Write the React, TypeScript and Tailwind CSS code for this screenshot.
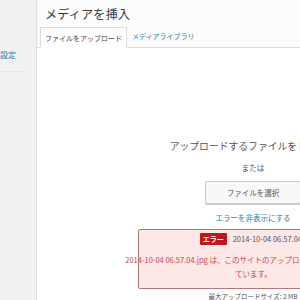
import React from "react";

export default function App() {
  const jp = { fontFamily: '"Noto Sans CJK JP", "Noto Sans", sans-serif' };
  return (
    <div className="w-[300px] h-[300px] overflow-hidden flex bg-white" style={jp}>
      <div className="w-[37px] shrink-0 bg-[#f1f1f1] border-r border-[#dedede] overflow-hidden">
        <div className="mt-[47px] h-[16px] flex justify-end pr-[22px] text-[8px] leading-[16px] text-[#2a7ea8] whitespace-nowrap">
          <span className="-mr-[2px]">の設定</span>
        </div>
        <div className="mt-[8px] w-[24px] h-px bg-[#e6e6e6]" />
      </div>
      <div className="flex-1 flex flex-col min-w-0">
        <div className="h-[48px] bg-[#fcfcfc] border-b border-[#dddddd] flex flex-col">
          <div className="pl-[8px] pt-[4px] h-[23px] text-[12px] leading-[20px] text-[#32373c] tracking-[0.3px] whitespace-nowrap">
            メディアを挿入
          </div>
          <div className="flex items-end pl-[3px] h-[24px]">
            <div className="h-[21px] -mb-px bg-white border border-b-0 border-[#dddddd] px-[4px] flex items-center text-[7px] text-[#444] whitespace-nowrap">
              ファイルをアップロード
            </div>
            <div className="h-[21px] px-[5px] flex items-center text-[7px] text-[#2a7ea8] whitespace-nowrap">
              メディアライブラリ
            </div>
          </div>
        </div>
        <div className="ml-[100px] w-[232px] flex flex-col items-center">
          <div className="mt-[90px] text-[9.8px] leading-[16px] text-[#555] whitespace-nowrap">
            アップロードするファイルをドロップ
          </div>
          <div className="mt-[9px] text-[7.5px] leading-[10px] text-[#555]">または</div>
          <div className="mt-[8px] w-[96px] h-[23px] bg-[#f7f7f7] border border-[#cccccc] rounded-[2px] shadow-[0_1px_0_#ccc] flex items-center justify-center text-[7.5px] text-[#555] whitespace-nowrap">
            ファイルを選択
          </div>
          <div className="mt-[9px] text-[7.5px] leading-[10px] text-[#2a7ea8] whitespace-nowrap">
            エラーを非表示にする
          </div>
          <div className="mt-[6px] self-stretch ml-[1px] h-[60px] bg-[#fde8e8] border border-[#b07878] rounded-[2px] flex flex-col items-center text-[7.5px] whitespace-nowrap">
            <div className="mt-[3px] ml-[8px] flex items-center gap-[6px]">
              <span className="bg-[#c0171d] text-white font-bold px-[3px] text-[7px] h-[12px] leading-[12px] rounded-[1px]">エラー</span>
              <span className="text-[#555]">2014-10-04 06.57.04.jpg</span>
            </div>
            <div className="mt-[8px] leading-[13px] text-[#d04545]">
              2014-10-04 06.57.04.jpg は、このサイトのアップロードサイズの上限を超え
            </div>
            <div className="mt-[1px] leading-[13px] text-[#d04545]">ています。</div>
          </div>
          <div className="mt-[1px] text-[6.5px] leading-[12px] text-[#555] whitespace-nowrap">
            最大アップロードサイズ: 2 MB
          </div>
        </div>
      </div>
    </div>
  );
}
